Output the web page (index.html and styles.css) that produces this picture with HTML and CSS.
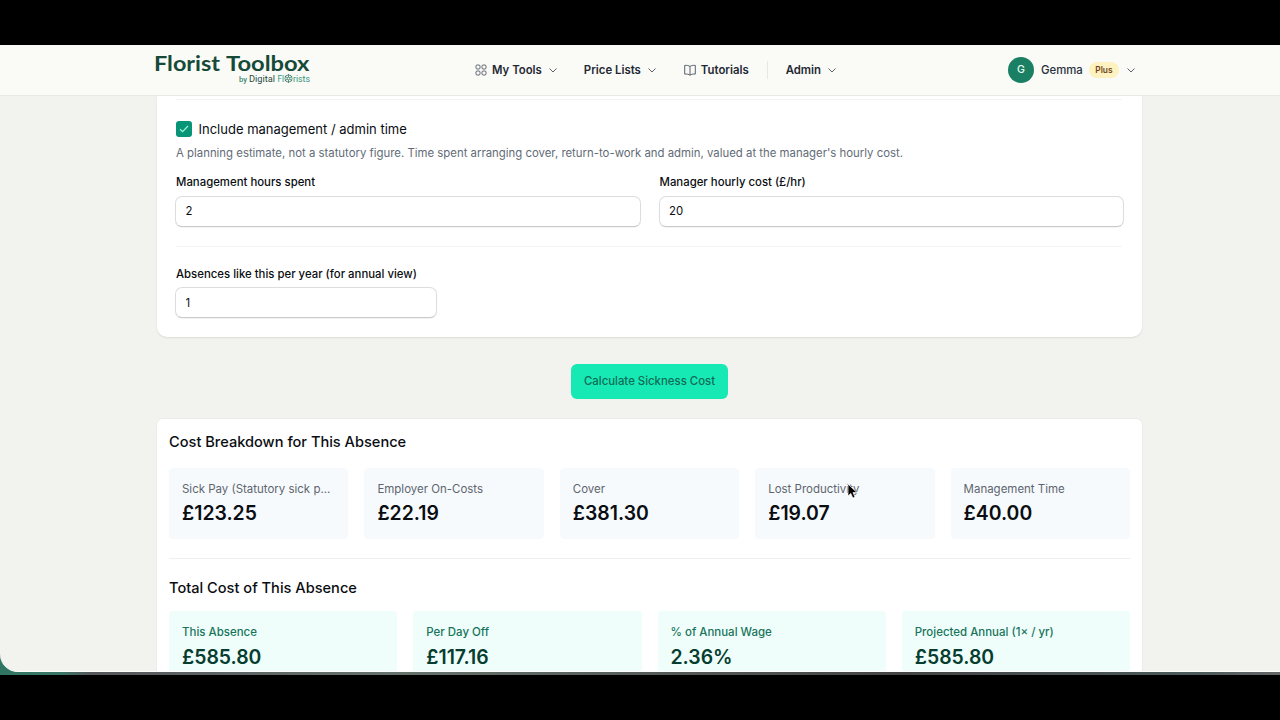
FILE: index.html
```
<!DOCTYPE html>
<html lang="en">
<head>
 <meta charset="UTF-8">
 <meta name="viewport" content="width=device-width, initial-scale=1.0">
 <title>Florist Toolbox</title>
 <link rel="stylesheet" href="styles.css">
</head>
<body>
 <div class="desktop">
 <div class="window">
 <header class="topbar">
  <svg class="logo" width="160" height="40" viewBox="0 0 160 40" role="img" aria-label="Florist Toolbox">
   <text class="logo-name" x="0" y="21.300" textLength="66" lengthAdjust="spacingAndGlyphs">Florist</text>
   <text class="logo-name" x="72" y="21.300" textLength="83.500" lengthAdjust="spacingAndGlyphs">Toolbox</text>
   <text class="logo-by" x="85" y="31.500" textLength="8" lengthAdjust="spacingAndGlyphs">by</text>
   <text class="logo-digital" x="95" y="32" textLength="26" lengthAdjust="spacingAndGlyphs">Digital</text>
   <text class="logo-florists" x="123.500" y="32" textLength="6.500" lengthAdjust="spacingAndGlyphs">Fl</text>
   <text class="logo-florists" x="139" y="32" textLength="17" lengthAdjust="spacingAndGlyphs">rists</text>
   <g class="logo-flower">
    <circle cx="134.500" cy="28.500" r="3.600"/>
    <circle cx="134.500" cy="28.500" r="1.300"/>
    <path d="M134.500 24v3.200M134.500 29.800v3.200M130.800 26.300l2.600 1.500M135.600 29.200l2.600 1.500M130.800 30.700l2.600-1.500M135.600 27.800l2.600-1.500"/>
   </g>
  </svg>
  <nav class="menu">
   <a class="menu-item tools">
    <svg class="icon" width="12" height="12" viewBox="0 0 12 12"><rect x="1" y="1" width="4" height="4" rx="1.200"/><rect x="7" y="1" width="4" height="4" rx="1.200"/><rect x="1" y="7" width="4" height="4" rx="1.200"/><rect x="7" y="7" width="4" height="4" rx="1.200"/></svg>
    <span>My Tools</span>
    <svg class="chevron" width="8" height="5" viewBox="0 0 8 5"><path d="M.5.500 4 4 7.500.500"/></svg>
   </a>
   <a class="menu-item prices">
    <span>Price Lists</span>
    <svg class="chevron" width="8" height="5" viewBox="0 0 8 5"><path d="M.5.500 4 4 7.500.500"/></svg>
   </a>
   <a class="menu-item tutorials">
    <svg class="icon" width="12" height="12" viewBox="0 0 12 12"><path d="M6 2.500C4.700 1.500 3 1.200.700 1.400v8.700C3 9.900 4.700 10.200 6 11.200c1.300-1 3-1.300 5.300-1.100V1.400C9 1.200 7.300 1.500 6 2.500zM6 2.500v8.700"/></svg>
    <span>Tutorials</span>
   </a>
   <a class="menu-item admin">
    <span>Admin</span>
    <svg class="chevron" width="8" height="5" viewBox="0 0 8 5"><path d="M.5.500 4 4 7.500.500"/></svg>
   </a>
  </nav>
  <div class="user">
   <span class="avatar">G</span>
   <span class="user-name">Gemma</span>
   <span class="plan">Plus</span>
   <svg class="chevron" width="8" height="5" viewBox="0 0 8 5"><path d="M.5.500 4 4 7.500.500"/></svg>
  </div>
 </header>

 <main class="page">
  <section class="form-card">
   <div class="admin-time">
    <label class="check">
     <span class="checkbox"><svg width="10" height="8" viewBox="0 0 10 8"><path d="M1 4.200 3.600 6.700 9 1"/></svg></span>
     <span>Include management / admin time</span>
    </label>
    <p class="hint">A planning estimate, not a statutory figure. Time spent arranging cover, return-to-work and admin, valued at the manager's hourly cost.</p>
    <div class="fields">
     <div class="field">
      <label for="hours">Management hours spent</label>
      <input type="text" id="hours" value="2">
     </div>
     <div class="field">
      <label for="rate">Manager hourly cost (£/hr)</label>
      <input type="text" id="rate" value="20">
     </div>
    </div>
   </div>
   <div class="field yearly">
    <label for="absences">Absences like this per year (for annual view)</label>
    <input type="text" id="absences" value="1">
   </div>
  </section>

  <button class="calculate">Calculate Sickness Cost</button>

  <section class="results">
   <h2>Cost Breakdown for This Absence</h2>
   <div class="costs">
    <div class="cost"><p>Sick Pay (Statutory sick p...</p><strong>£123.25</strong></div>
    <div class="cost"><p>Employer On-Costs</p><strong>£22.19</strong></div>
    <div class="cost"><p>Cover</p><strong>£381.30</strong></div>
    <div class="cost"><p>Lost Productivity</p><strong>£19.07</strong></div>
    <div class="cost"><p>Management Time</p><strong>£40.00</strong></div>
   </div>
   <h2 class="total-title">Total Cost of This Absence</h2>
   <div class="totals">
    <div class="total"><p>This Absence</p><strong>£585.80</strong></div>
    <div class="total"><p>Per Day Off</p><strong>£117.16</strong></div>
    <div class="total"><p>% of Annual Wage</p><strong>2.36%</strong></div>
    <div class="total"><p>Projected Annual (1× / yr)</p><strong>£585.80</strong></div>
   </div>
  </section>
 </main>
 </div>
 </div>
 <svg class="cursor" width="12" height="17" viewBox="0 0 12 17"><path d="M1 1v12l2.800-2.600 2 4.600 2.200-1-2-4.400h4z"/></svg>
</body>
</html>
```
FILE: styles.css
```
* {
    box-sizing: border-box;
}

body {
    margin: 0;
    height: 720px;
    padding: 45px 0;
    overflow: hidden;
    background: #000;
    color: #0a0d12;
    font-family: Inter, "Liberation Sans", sans-serif;
    font-size: 11.380px;
}

p, h2 {
    margin: 0;
}

.desktop {
    height: 630px;
    background: linear-gradient(90deg, #2f7562 0, #397765 60px, #55575b 90px, #66736d 400px, #444 900px, #4b5b5b 1200px, #666 1280px);
}

.window {
    height: 627px;
    overflow: hidden;
    background: #f2f3ef;
    border-bottom: 1px solid #fff;
    border-bottom-left-radius: 18px;
}

.topbar {
    display: flex;
    align-items: center;
    height: 51px;
    padding: 0 145px 0 154px;
    background: #fafaf7;
    border-bottom: 1px solid #e9eae6;
}

.logo {
    flex: none;
}

.logo-name {
    font-family: Lato, sans-serif;
    font-size: 21.500px;
    font-weight: 700;
    fill: #164a38;
}

.logo-by,
.logo-digital,
.logo-florists {
    font-family: Roboto, sans-serif;
    font-size: 9px;
}

.logo-by {
    font-size: 7px;
    font-weight: 500;
    fill: #3b8b74;
}

.logo-digital {
    fill: #244b40;
}

.logo-florists {
    fill: #349779;
}

.logo-flower {
    fill: none;
    stroke: #3b7d6b;
    stroke-width: .8;
}

.menu {
    display: flex;
    align-items: center;
    margin-left: 161px;
    color: #1f2933;
    font-weight: 600;
}

.menu-item {
    display: flex;
    align-items: center;
    height: 18px;
}

.icon,
.chevron {
    fill: none;
    stroke: #59616a;
    stroke-width: 1;
}

.icon {
    margin-right: 5px;
}

.menu .chevron {
    margin-left: 7px;
}

.tools {
    margin-right: 27px;
}

.prices {
    margin-right: 28px;
}

.tutorials {
    padding-right: 18px;
    border-right: 1px solid #e7e8e5;
}

.admin {
    padding-left: 18px;
}

.user {
    display: flex;
    align-items: center;
    margin-left: auto;
    color: #29313b;
    font-weight: 500;
}

.avatar {
    width: 26px;
    height: 26px;
    border-radius: 50%;
    background: #1b7f64;
    color: #e9fff6;
    line-height: 26px;
    text-align: center;
    font-size: 10.500px;
}

.user-name {
    margin-left: 7px;
}

.plan {
    margin: 0 8px 0 6px;
    padding: 0 6.500px;
    border-radius: 8px;
    background: #fdf2c0;
    color: #71451c;
    font-size: 8.300px;
    font-weight: 600;
    line-height: 16px;
}

.page {
    display: flex;
    flex-direction: column;
    align-items: center;
    width: 987px;
    margin-left: 156px;
}

.form-card {
    width: 985px;
    height: 241px;
    padding: 3px 20px 0 19px;
    background: #fff;
    border-radius: 0 0 10px 10px;
    box-shadow: 0 1px 2px #0000001a;
}

.admin-time {
    height: 148px;
    padding-top: 21px;
    border-top: 1px solid #f3f4f5;
    border-bottom: 1px solid #f3f4f5;
}

.check {
    display: flex;
    align-items: center;
    gap: 6.500px;
    height: 16px;
    font-size: 13px;
}

.checkbox {
    display: flex;
    align-items: center;
    justify-content: center;
    width: 16px;
    height: 16px;
    border-radius: 3px;
    background: #079477;
}

.checkbox path {
    fill: none;
    stroke: #a0f3d9;
    stroke-width: 1.200;
}

.hint {
    margin-top: 8px;
    color: #626b76;
    line-height: 17px;
}

.fields {
    display: grid;
    grid-template-columns: 1fr 1fr;
    gap: 18px;
    margin: 12px -2px 0 -1px;
}

.field label {
    display: block;
    margin-left: 1px;
    line-height: 17px;
    font-weight: 500;
}

.field input {
    display: block;
    width: 100%;
    height: 31px;
    margin-top: 5px;
    padding: 0 9.500px 1px;
    border: 1px solid #dcdddf;
    border-bottom-color: #c9cacd;
    border-radius: 7px;
    background: #fff;
    color: #0a0d12;
    font: inherit;
    box-shadow: 0 1px 1px #0000000d;
}

.yearly {
    width: 262px;
    margin: 19px 0 0 -1px;
}

.yearly input {
    margin-top: 4px;
    padding-bottom: 0;
}

.calculate {
    width: 157px;
    height: 35px;
    margin: 27px 0 19px;
    padding: 0 0 1px;
    border: none;
    border-radius: 6px;
    background: #16e9b4;
    color: #126b56;
    font: inherit;
    font-weight: 500;
}

.results {
    width: 987px;
    height: 300px;
    padding: 13px 12px;
    background: #fff;
    border: 1px solid #ecedea;
    border-radius: 7px 7px 0 0;
}

h2 {
    font-size: 14.600px;
    font-weight: 500;
    line-height: 20px;
}

.costs {
    display: grid;
    grid-template-columns: repeat(5, 1fr);
    gap: 16px;
    height: 107px;
    padding: 16px 0 20px;
    border-bottom: 1px solid #eeeff0;
}

.cost,
.total {
    min-width: 0;
    padding: 13px;
    border-radius: 4px;
    background: #f7fafc;
}

.cost p,
.total p {
    color: #5d6570;
    font-size: 11.480px;
    line-height: 17px;
    white-space: nowrap;
}

.cost strong,
.total strong {
    display: block;
    margin-top: 2px;
    font-size: 19.400px;
    font-weight: 600;
    line-height: 26px;
}

.total-title {
    margin-top: 19px;
}

.totals {
    display: grid;
    grid-template-columns: repeat(4, 1fr);
    gap: 16px;
    margin-top: 13px;
}

.total {
    height: 80px;
    background: #effefa;
}

.total p {
    color: #18745d;
    font-weight: 500;
}

.total strong {
    margin-top: 3px;
    color: #073d30;
}

/* mouse pointer lying over the cards */
.cursor {
    position: absolute;
    left: 847px;
    top: 483px;
    fill: #000;
    stroke: #fff;
    stroke-width: .7;
}
```
